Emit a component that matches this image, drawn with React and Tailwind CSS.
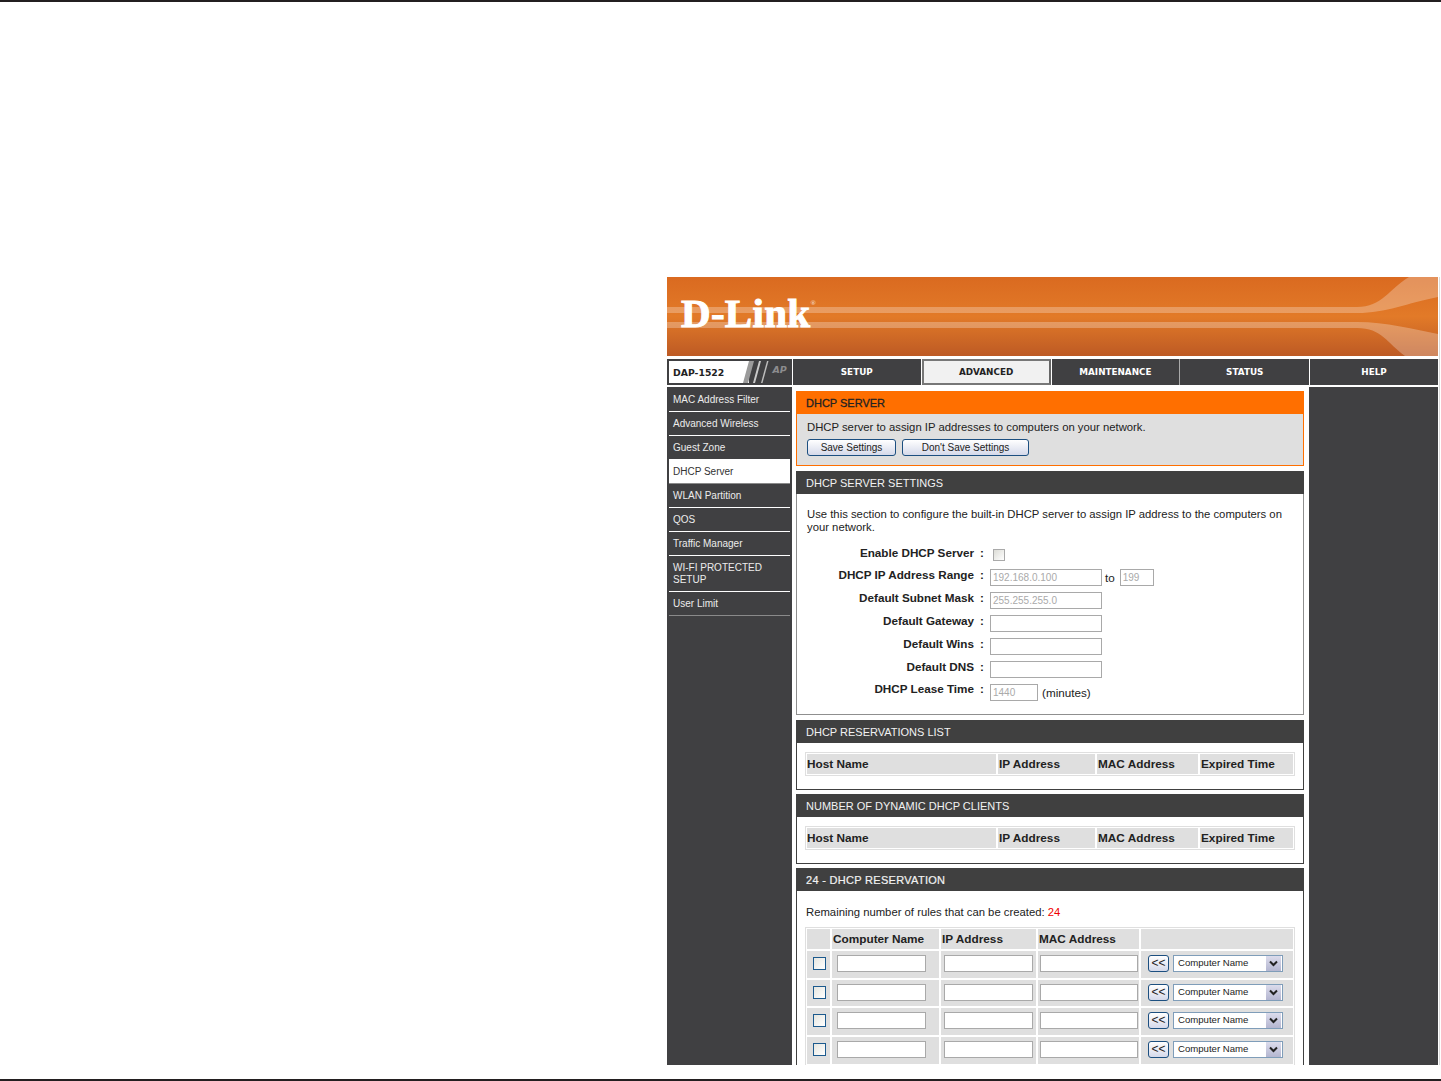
import React from 'react';

const SIDE_ITEMS = ['MAC Address Filter', 'Advanced Wireless', 'Guest Zone', 'DHCP Server', 'WLAN Partition', 'QOS', 'Traffic Manager', 'WI-FI PROTECTED SETUP', 'User Limit'];

const FIELDS = [
  { label: 'DHCP IP Address Range', value: '192.168.0.100', extra: true },
  { label: 'Default Subnet Mask', value: '255.255.255.0' },
  { label: 'Default Gateway', value: '' },
  { label: 'Default Wins', value: '' },
  { label: 'Default DNS', value: '' },
];

function Banner() {
  return (
    <div className="relative h-[79px] w-[771px] bg-gradient-to-b from-[#da6a20] via-[#e27a28] to-[#bd5a24] overflow-hidden">
      <svg className="absolute inset-0" width="771" height="79" viewBox="0 0 771 79">
        <path d="M0 30 L690 30 C715 30 722 12 742 0 L771 0 L771 20 C740 26 720 36 690 36 L0 36 Z" fill="#fff" fillOpacity="0.27" />
        <path d="M0 45 L690 45 C720 45 745 52 771 57 L771 79 L738 79 C720 66 715 51 690 51 L0 51 Z" fill="#fff" fillOpacity="0.27" />
      </svg>
      <div className="relative flex items-start pl-[14px] pt-[13px] font-['Liberation_Serif',serif] font-bold text-white">
        <span className="text-[41px] leading-[46px] tracking-[0.3px] [-webkit-text-stroke:1px_white]">D-Link</span>
        <span className="text-[7px] leading-[8px] mt-[9px] text-[#f3d9c6]">®</span>
      </div>
    </div>
  );
}

function NavTab({ label, active, w, border }) {
  if (active) {
    return (
      <div className={`${w} h-full bg-[#404042] flex p-0`}>
        <div className="flex-1 bg-[#f1f1f1] border-2 border-[#777] border-r-[#666] flex items-center justify-center pt-[2px] text-[8.8px] font-bold text-[#222]">{label}</div>
      </div>
    );
  }
  return (
    <div className={`${w} h-full bg-[#404042] ${border} flex items-center justify-center pt-[2px] text-[8.8px] font-bold text-white`}>{label}</div>
  );
}

function NavBar() {
  return (
    <div className="flex h-[26px] mt-[3px] font-['DejaVu_Sans',sans-serif]">
      <div className="w-[125px] h-full bg-[#404042] border-2 border-[#404042] flex relative overflow-hidden mr-[1px]">
        <div className="w-[74px] bg-white flex items-center pl-[4px] pt-[2px] text-[9.3px] font-bold text-[#222]">DAP-1522</div>
        <svg width="30" height="22" viewBox="0 0 30 22" className="shrink-0">
          <rect x="0" y="0" width="6" height="22" fill="#fff" />
          <path d="M0 22 L6 0 L11 0 L5 22 Z" fill="#9a9a9a" />
          <path d="M10 22 L16 0 L18 0 L12 22 Z" fill="#c9c9c9" />
          <path d="M18 22 L24 0 L25.5 0 L19.5 22 Z" fill="#bdbdbd" />
        </svg>
        <span className="absolute right-[3px] top-[2px] text-[9.5px] leading-[14px] font-bold italic text-[#8c8c8e]">AP</span>
      </div>
      <NavTab label="SETUP" w="w-[129px]" border="border-r border-white" />
      <NavTab label="ADVANCED" w="w-[129px]" active />
      <div className="w-[1px] bg-white" />
      <NavTab label="MAINTENANCE" w="w-[129px]" border="border-r border-[#aaa]" />
      <NavTab label="STATUS" w="w-[130px]" border="border-r border-white" />
      <NavTab label="HELP" w="w-[128px]" />
    </div>
  );
}

function Sidebar() {
  return (
    <div className="w-[125px] shrink-0 bg-[#404042] px-[2px] pt-[1px] font-['Liberation_Sans',sans-serif] text-[10px] leading-[12px]">
      {SIDE_ITEMS.map((item, i) => {
        const active = item === 'DHCP Server';
        const last = i === SIDE_ITEMS.length - 1;
        return (
          <div
            key={item}
            className={`px-[4px] pt-[1px] border-b flex items-center ${item.length > 20 ? 'h-[36px]' : 'h-[24px]'} ${active ? 'bg-white text-[#333] border-[#8a8a8a]' : 'text-[#ececec]'} ${!active && last ? 'border-[#8a8a8a]' : ''} ${!active && !last ? 'border-white' : ''}`}
          >
            <span className={item.length > 20 ? 'w-[100px]' : ''}>{item}</span>
          </div>
        );
      })}
    </div>
  );
}

function Section({ title, h, border = 'border-[#404040]', children }) {
  return (
    <div className={`${h} border ${border} border-t-0 mb-[5px]`}>
      <div className="h-[23px] bg-[#404040] text-[#f2f2f2] text-[11px] leading-[25px] pl-[10px] -mx-[1px]">{title}</div>
      {children}
    </div>
  );
}

function TextBox({ w, value = '', mt = 'mt-[2px]' }) {
  return (
    <input
      readOnly
      value={value}
      className={`${w} ${mt} h-[17px] border border-[#a9a9a9] bg-white px-[2px] text-[10px] font-normal text-[#aaa] outline-none font-['Liberation_Sans',sans-serif]`}
    />
  );
}

function ListTable() {
  return (
    <div className="ml-[8px] mt-[9px] w-[490px] bg-[#dfdfdf] p-[1px] grid grid-cols-[191px_99px_103px_95px] text-[11.8px] leading-[20px] font-bold text-[#222]">
      {['Host Name', 'IP Address', 'MAC Address', 'Expired Time'].map((c, i) => (
        <div key={c} className={`h-[22px] border border-white ${i > 0 ? 'pl-[1px]' : ''}`}>{c}</div>
      ))}
    </div>
  );
}

function ReservationRow() {
  return (
    <>
      <div className="border border-white pl-[6px] pt-[6px]">
        <div className="w-[13px] h-[13px] border border-[#1c5a8e] bg-gradient-to-br from-[#e6e6e0] to-white" />
      </div>
      <div className="border border-white pl-[5px] pt-[4px]"><TextBox w="w-[89px]" mt="mt-0" /></div>
      <div className="border border-white pl-[3px] pt-[4px]"><TextBox w="w-[89px]" mt="mt-0" /></div>
      <div className="border border-white pl-[2px] pt-[4px]"><TextBox w="w-[98px]" mt="mt-0" /></div>
      <div className="border border-white pl-[7px] pt-[4px] flex items-start gap-[4px]">
        <div className="w-[21px] h-[17px] rounded-[3px] border border-[#1c4f80] bg-gradient-to-b from-white to-[#d5d9ea] text-[12px] leading-[15px] text-center text-[#222]">&lt;&lt;</div>
        <div className="w-[110px] h-[17px] border border-[#7f9db9] bg-white flex items-center justify-between pl-[4px] pr-[1px] text-[9.6px] text-[#222]">
          <span>Computer Name</span>
          <div className="w-[15px] h-[15px] bg-gradient-to-b from-[#dcdcec] to-[#b4b6d0] flex items-center justify-center">
            <svg width="9" height="7" viewBox="0 0 9 7"><path d="M1 1.5 L4.5 5 L8 1.5" fill="none" stroke="#222" strokeWidth="2" /></svg>
          </div>
        </div>
      </div>
    </>
  );
}

function MainContent() {
  return (
    <div className="w-[517px] shrink-0 pl-[4px] pr-[5px] pt-[4px] bg-white font-['Liberation_Sans',sans-serif] text-[11.3px] text-[#222] overflow-hidden">
      <div className="h-[75px] border border-[#ff6f00] border-t-0 bg-[#dfdfdf] mb-[5px]">
        <div className="h-[23px] bg-[#ff6f00] text-[#222] text-[11px] leading-[24px] pl-[10px] -mx-[1px] [-webkit-text-stroke:0.3px_#222]">DHCP SERVER</div>
        <p className="pl-[10px] mt-[6px] leading-[14px]">DHCP server to assign IP addresses to computers on your network.</p>
        <div className="flex gap-[6px] pl-[10px] mt-[5px] text-[10px]">
          <div className="w-[89px] h-[17px] rounded-[3px] border border-[#1c4f80] bg-gradient-to-b from-white to-[#d5d9ea] text-center leading-[16px]">Save Settings</div>
          <div className="w-[127px] h-[17px] rounded-[3px] border border-[#1c4f80] bg-gradient-to-b from-white to-[#d5d9ea] text-center leading-[16px]">Don't Save Settings</div>
        </div>
      </div>

      <Section title="DHCP SERVER SETTINGS" h="h-[244px]" border="border-[#8f8f8f]">
        <p className="pl-[10px] pr-[10px] pt-[14px] leading-[13px]">Use this section to configure the built-in DHCP server to assign IP address to the computers on your network.</p>
        <div className="mt-[10px] font-bold text-[11.7px]">
          <div className="flex h-[23px] leading-[17px]">
            <div className="w-[177px] text-right">Enable DHCP Server</div>
            <div className="w-[16px] text-center">:</div>
            <div className="ml-[3px] mt-[5px] w-[12px] h-[12px] border border-[#a9a9a9] bg-gradient-to-br from-[#dcdcd6] to-white" />
          </div>
          {FIELDS.map((f) => (
            <div key={f.label} className="flex h-[23px] leading-[15px]">
              <div className="w-[177px] text-right">{f.label}</div>
              <div className="w-[16px] text-center">:</div>
              <TextBox w="w-[112px]" value={f.value} />
              {f.extra && (
                <>
                  <span className="font-normal leading-[17px] ml-[3px] mr-[5px] mt-[2px]">to</span>
                  <TextBox w="w-[34px]" value="199" />
                </>
              )}
            </div>
          ))}
          <div className="flex h-[23px] leading-[14px]">
            <div className="w-[177px] text-right">DHCP Lease Time</div>
            <div className="w-[16px] text-center">:</div>
            <TextBox w="w-[48px]" value="1440" />
            <span className="font-normal leading-[17px] ml-[4px] mt-[2px]">(minutes)</span>
          </div>
        </div>
      </Section>

      <Section title="DHCP RESERVATIONS LIST" h="h-[70px]"><ListTable /></Section>
      <div className="-mt-[1px]" />
      <Section title="NUMBER OF DYNAMIC DHCP CLIENTS" h="h-[70px]"><ListTable /></Section>
      <div className="-mt-[1px]" />

      <div className="border-x border-[#404040]">
        <div className="h-[23px] bg-[#404040] text-[#f2f2f2] text-[11px] leading-[25px] pl-[10px] -mx-[1px] tracking-[0.3px] [-webkit-text-stroke:0.2px_#f2f2f2]">24 - DHCP RESERVATION</div>
        <p className="pl-[9px] pt-[14px] leading-[14px]">Remaining number of rules that can be created: <span className="text-[#f00000]">24</span></p>
        <div className="ml-[8px] mt-[8px] w-[490px] bg-[#dfdfdf] p-[1px] grid grid-cols-[25px_109px_97px_103px_154px] grid-rows-[22px_29px_28px_29px_29px]">
          <div className="border border-white" />
          {['Computer Name', 'IP Address', 'MAC Address'].map((c) => (
            <div key={c} className="border border-white pl-[1px] font-bold text-[11.8px] leading-[20px]">{c}</div>
          ))}
          <div className="border border-white" />
          <ReservationRow />
          <ReservationRow />
          <ReservationRow />
          <ReservationRow />
        </div>
      </div>
    </div>
  );
}

export default function App() {
  return (
    <div className="w-[1441px] h-[1081px] bg-white flex flex-col overflow-hidden">
      <div className="h-[2px] bg-[#231f20] shrink-0" />
      <div className="ml-[667px] mt-[275px] w-[773px] h-[788px] pr-[1px] border-r border-[#dcdcdc] flex flex-col overflow-hidden shrink-0">
        <Banner />
        <NavBar />
        <div className="flex mt-[2px] flex-1 min-h-0">
          <Sidebar />
          <MainContent />
          <div className="w-[129px] shrink-0 bg-[#404042]" />
        </div>
      </div>
      <div className="mt-auto h-[2px] bg-[#231f20] shrink-0" />
    </div>
  );
}
